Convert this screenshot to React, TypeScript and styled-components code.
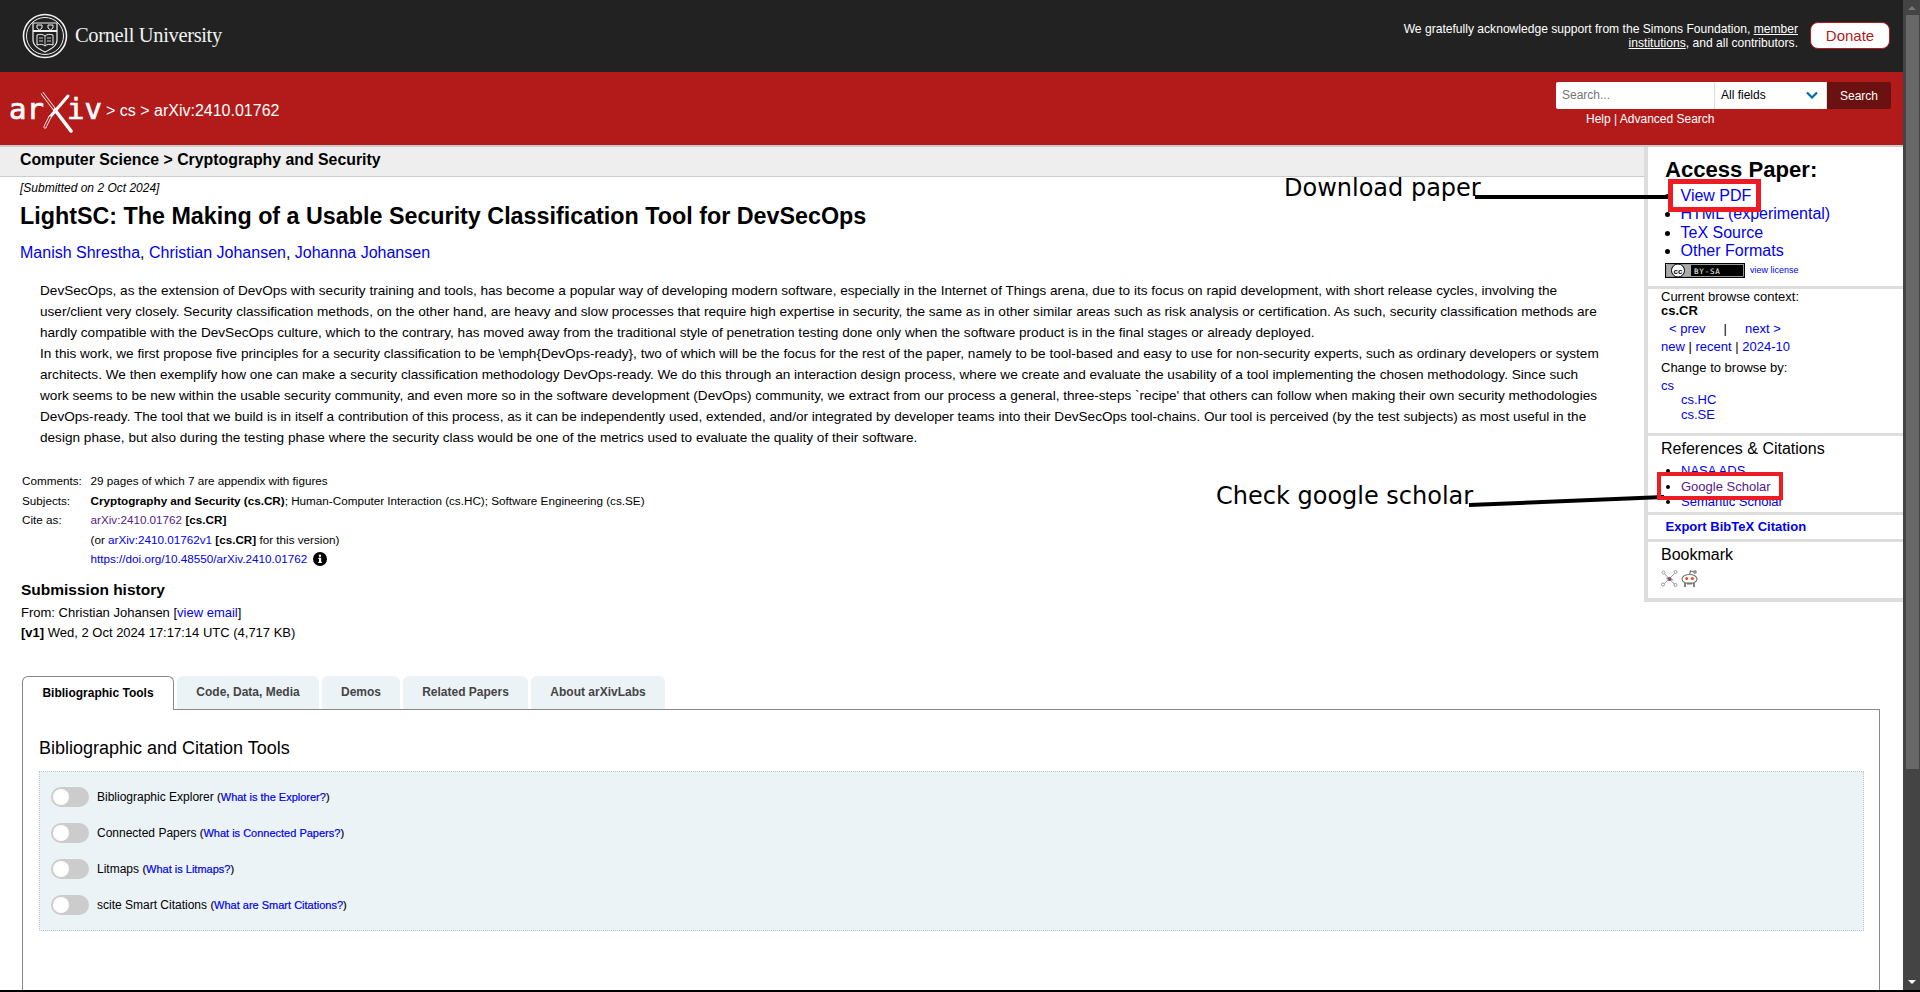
import styled, { createGlobalStyle } from "styled-components";

const GlobalStyle = createGlobalStyle`
  html, body {
    margin: 0;
    padding: 0;
    height: 100%;
    overflow: hidden;
    background: #fff;
    font-family: "Liberation Sans", Arial, sans-serif;
    color: #000;
  }
  a { color: #0000ee; text-decoration: none; }
`;

const Frame = styled.div`
  position: relative;
  width: 1920px;
  height: 992px;
  overflow: hidden;
  display: flex;
  flex-direction: column;
`;

const Viewport = styled.div`
  display: flex;
  height: 990px;
  overflow: hidden;
`;

const BottomEdge = styled.div`
  height: 2px;
  background: #000;
`;

const Page = styled.div`
  width: 1903px;
`;

// Scrollbar
const Scrollbar = styled.div`
  width: 17px;
  background: #444;
  display: flex;
  flex-direction: column;
  align-items: center;
`;

const ScrollArrow = styled.div<{ $down?: boolean }>`
  width: 0;
  height: 0;
  margin: ${(p) => (p.$down ? "auto 0 6px" : "6px 0 5px")};
  border-left: 4px solid transparent;
  border-right: 4px solid transparent;
  ${(p) => (p.$down ? "border-top: 4px solid #fff;" : "border-bottom: 4px solid #777;")}
`;

const ScrollThumb = styled.div`
  width: 13px;
  height: 754px;
  margin-left: 1px;
  background: #686868;
`;

// Header
const TopBar = styled.header`
  height: 72px;
  background: #222;
  display: flex;
  align-items: center;
  justify-content: space-between;
  padding: 0 13px 0 22px;
`;

const CornellLogo = styled.div`
  display: flex;
  align-items: center;
  gap: 7px;
`;

const CornellName = styled.span`
  font-family: "Liberation Serif", serif;
  font-size: 20.5px;
  letter-spacing: -0.35px;
  color: #f2f2f2;
  padding-bottom: 2px;
`;

const Support = styled.div`
  display: flex;
  align-items: center;
  gap: 12px;
`;

const SupportText = styled.p`
  margin: 0;
  width: 402px;
  text-align: right;
  color: #fff;
  font-size: 12.1px;
  line-height: 14px;

  a {
    color: #fff;
    text-decoration: underline;
  }
`;

const Donate = styled.a`
  width: 80px;
  height: 27px;
  margin-top: -1px;
  box-sizing: border-box;
  background: #fff;
  border: 1px solid #b31b1b;
  border-radius: 8px;
  display: flex;
  align-items: center;
  justify-content: center;
  font-size: 15px;
  && {
    color: #b31b1b;
  }
`;

const RedBar = styled.div`
  height: 73px;
  border-bottom: 2px solid #ccc;
  background: #b31b1b;
  display: flex;
  justify-content: space-between;
  padding: 0 12px 0 10px;
`;

const Crumbs = styled.div`
  display: flex;
  align-items: center;
  gap: 4px;
  color: #fff;
  font-size: 16px;
  height: 78px;
`;

const SearchBlock = styled.div`
  padding-top: 10px;
  width: 335px;
`;

const SearchRow = styled.div`
  display: flex;
  height: 27px;
`;

const SearchInput = styled.input`
  width: 158px;
  box-sizing: border-box;
  border: none;
  outline: none;
  padding: 0 6px 2px;
  font: 12px "Liberation Sans", sans-serif;
  background: #fff;
  border-radius: 2px 0 0 2px;
`;

const FieldSelect = styled.div`
  width: 113px;
  box-sizing: border-box;
  background: #fff;
  border-left: 1px solid #ddd;
  border-right: 1px solid #ddd;
  padding: 0 8px 2px 6px;
  display: flex;
  align-items: center;
  justify-content: space-between;
  font-size: 12px;
`;

const SearchButton = styled.button`
  width: 64px;
  border: none;
  background: #6a1212;
  color: #fff;
  font: 12px "Liberation Sans", sans-serif;
  border-radius: 0 2px 2px 0;
  padding: 0;
`;

const SearchLinks = styled.div`
  margin: 3px 0 0 30px;
  color: #fff;
  font-size: 12px;
  line-height: 14px;

  a {
    color: #fff;
  }
`;

// Article area
const Upper = styled.div`
  display: flex;
  align-items: flex-start;
`;

const Article = styled.main`
  width: 1644px;
`;

const Subheader = styled.div`
  box-sizing: border-box;
  height: 30px;
  background: #eee;
  border-bottom: 1px solid #ccc;
  padding-left: 20px;
  font-size: 15.85px;
  font-weight: bold;
  line-height: 25px;
`;

const Submitted = styled.div`
  margin: 5px 0 0 20px;
  font-size: 12px;
  font-style: italic;
  line-height: 13px;
`;

const Title = styled.h1`
  margin: 7px 0 0 20px;
  font-size: 23.3px;
  line-height: 28px;
  font-weight: bold;
`;

const Authors = styled.div`
  margin: 13px 0 0 20px;
  font-size: 16px;
  line-height: 20px;
`;

const Abstract = styled.blockquote`
  margin: 17px 0 0 40px;
  width: 1564px;
  font-size: 13.6px;
  line-height: 21px;
`;

const AbstractPara = styled.p`
  margin: 0;
`;

const Meta = styled.div`
  margin: 23px 0 0 22px;
  display: grid;
  grid-template-columns: 68.5px 1fr;
  grid-auto-rows: 19.5px;
  font-size: 11.7px;
  align-items: center;
`;

const Visited = styled.a`
  && {
    color: #551a8b;
  }
`;

const InfoIcon = styled.span`
  display: inline-flex;
  vertical-align: -3px;
  margin-left: 6px;
`;

const HistoryTitle = styled.h2`
  margin: 11px 0 0 21px;
  font-size: 15.5px;
  line-height: 20px;
`;

const HistoryLine = styled.div<{ $mt: number }>`
  margin: ${(p) => p.$mt}px 0 0 21px;
  font-size: 13px;
  line-height: 19px;
`;

// Right column
const Sidebar = styled.aside`
  width: 259px;
  box-sizing: border-box;
  border-left: 4px solid #ddd;
  border-bottom: 4px solid #ddd;
`;

const Section = styled.section<{ $h: number }>`
  height: ${(p) => p.$h}px;
  box-sizing: border-box;
  border-bottom: 3px solid #ddd;
  padding-left: 13px;

  &:last-child {
    border-bottom: none;
  }
`;

const AccessTitle = styled.h2`
  margin: 0;
  padding: 11px 0 0 4px;
  font-size: 22.1px;
  line-height: 24px;
`;

const AccessList = styled.ul`
  margin: 5px 0 0;
  padding: 0 0 0 19.5px;
  font-size: 16px;
  line-height: 18.4px;
`;

const LicenseRow = styled.div`
  margin: 2px 0 0 4px;
  display: flex;
  align-items: center;
  gap: 5px;
  font-size: 9px;
`;

const Browse = styled.div<{ $mt?: number; $lh?: number; $indent?: number; $bold?: boolean }>`
  margin-top: ${(p) => p.$mt ?? 0}px;
  margin-left: ${(p) => p.$indent ?? 0}px;
  line-height: ${(p) => p.$lh ?? 14}px;
  font-size: 13px;
  font-weight: ${(p) => (p.$bold ? "bold" : "normal")};
  white-space: pre;
`;

const SideHeading = styled.h3`
  margin: 0;
  padding-top: 4px;
  font-size: 16px;
  font-weight: normal;
  line-height: 18px;
`;

const RefList = styled.ul`
  margin: 5px 0 0;
  padding: 0 0 0 20px;
  font-size: 13px;
  line-height: 15.5px;
`;

const ExportLink = styled.a`
  display: block;
  padding-left: 4.5px;
  font-size: 13px;
  font-weight: bold;
  line-height: 23px;
`;

const BookmarkIcons = styled.div`
  margin-top: 6px;
  display: flex;
  gap: 2px;
`;

// Labs
const Tabs = styled.div`
  margin: 34px 0 0 22px;
  display: flex;
  gap: 3px;
  position: relative;
  z-index: 1;
`;

const Tab = styled.div<{ $w: number; $active?: boolean }>`
  width: ${(p) => p.$w}px;
  height: 33px;
  box-sizing: border-box;
  display: flex;
  align-items: center;
  justify-content: center;
  font-size: 12px;
  font-weight: bold;
  border-radius: 6px 6px 0 0;
  background: ${(p) => (p.$active ? "#fff" : "#ecf3f7")};
  color: ${(p) => (p.$active ? "#000" : "#444")};
  border: ${(p) => (p.$active ? "1px solid #888" : "none")};
  border-bottom: none;
  ${(p) => p.$active && "height: 34px; margin-bottom: -1px;"}
`;

const LabsBody = styled.div`
  margin: 0 23px 0 22px;
  border: 1px solid #888;
  padding: 27px 15px 60px 16px;
`;

const LabsTitle = styled.h2`
  margin: 0;
  font-size: 18px;
  font-weight: normal;
  line-height: 22px;
`;

const ToolPanel = styled.div`
  margin-top: 12px;
  background: #ecf3f7;
  border: 1px dotted #bcc8cf;
  padding: 15px 11px;
  display: flex;
  flex-direction: column;
  gap: 16px;
`;

const ToolRow = styled.div`
  display: flex;
  align-items: center;
  gap: 8px;
  height: 20px;
  font-size: 12px;
`;

const Toggle = styled.span`
  width: 38px;
  height: 20px;
  border-radius: 10px;
  background: #ccc;
  display: flex;
  align-items: center;
  padding-left: 2px;
  box-sizing: border-box;
`;

const Knob = styled.span`
  width: 16px;
  height: 16px;
  border-radius: 50%;
  background: #fff;
`;

const ToolHelp = styled.span`
  font-size: 11px;
  -webkit-text-stroke: 0.2px currentColor;
`;

// Annotations over the page
const AnnotationLines = styled.svg`
  position: absolute;
  left: 0;
  top: 0;
  pointer-events: none;
`;

const RedBox = styled.div<{ $x: number; $y: number; $w: number; $h: number; $b: number }>`
  position: absolute;
  left: ${(p) => p.$x}px;
  top: ${(p) => p.$y}px;
  width: ${(p) => p.$w}px;
  height: ${(p) => p.$h}px;
  box-sizing: border-box;
  border: ${(p) => p.$b}px solid #ed1c24;
`;

const Note = styled.div<{ $x: number; $y: number }>`
  position: absolute;
  left: ${(p) => p.$x}px;
  top: ${(p) => p.$y}px;
  font-family: "DejaVu Sans", sans-serif;
  font-size: 24px;
  line-height: 28px;
  white-space: nowrap;
`;

const Seal = () => (
  <svg width="46" height="46" viewBox="0 0 46 46" fill="none" stroke="#f2f2f2">
    <circle cx="23" cy="23" r="21.5" strokeWidth="1.6" />
    <circle cx="23" cy="23" r="18.5" strokeWidth="1" />
    <path d="M11 10h24v17c0 6-6 9-12 12-6-3-12-6-12-12z" strokeWidth="1.2" fill="#222" />
    <path d="M11 18h24" strokeWidth="2" />
    <path d="M15 12h5v3l-2.500 2-2.500-2zM26 12h5v3l-2.500 2-2.500-2z" strokeWidth="1" />
    <path d="M15 22c3-1 6-1 8 1 2-2 5-2 8-1v10c-3-1-6-1-8 1-2-2-5-2-8-1z" strokeWidth="1" />
    <path d="M23 23v10M17 25h4M17 28h4M25 25h4M25 28h4" strokeWidth=".8" />
  </svg>
);

const ArxivLogo = () => (
  <svg width="92" height="46" viewBox="0 0 92 46">
    <text x="-1" y="31" fill="#fff" stroke="#fff" strokeWidth=".7" fontFamily="'DejaVu Sans Mono', monospace" fontSize="29">ar</text>
    <text x="57" y="31" fill="#fff" stroke="#fff" strokeWidth=".7" fontFamily="'DejaVu Sans Mono', monospace" fontSize="29">iv</text>
    <path d="M32 5l13 17" stroke="#fff" strokeWidth="3.2" />
    <path d="M32 5l13 17" stroke="#b31b1b" strokeWidth="1.800" />
    <path d="M45 22l16 21" stroke="#fff" strokeWidth="3.600" strokeLinecap="round" />
    <path d="M58 8L40 29" stroke="#fff" strokeWidth="3" strokeLinecap="round" />
    <path d="M40 29l-5 10" stroke="#fff" strokeWidth="3" strokeLinecap="round" />
    <path d="M40 29l-5 10" stroke="#b31b1b" strokeWidth="1.600" strokeLinecap="round" />
  </svg>
);

const Chevron = () => (
  <svg width="12" height="8" viewBox="0 0 12 8" fill="none">
    <path d="M1 1.500l5 5 5-5" stroke="#0068ac" strokeWidth="2.200" />
  </svg>
);

const CcBadge = () => (
  <svg width="80" height="15" viewBox="0 0 80 15">
    <rect x=".5" y=".5" width="79" height="14" fill="#000" stroke="#000" />
    <rect x="1.500" y="1.500" width="77" height="12" fill="#000" stroke="#fff" strokeWidth=".6" />
    <path d="M2 2h24v11H2z" fill="#aaa" />
    <circle cx="13" cy="7.500" r="6.500" fill="#fff" stroke="#000" />
    <text x="13" y="10.500" textAnchor="middle" fontSize="8" fontWeight="bold" fontFamily="'Liberation Sans', sans-serif">cc</text>
    <text x="29" y="10.500" fill="#fff" fontSize="7.500" letterSpacing=".8" fontFamily="'DejaVu Sans Mono', monospace">BY-SA</text>
  </svg>
);

const ScienceWise = () => (
  <svg width="17" height="17" viewBox="0 0 17 17" fill="none" stroke="#999" strokeWidth="1">
    <path d="M3 3l11 12M14 3L3 14M8.500 9L5 8M8.500 9l4 1" />
    <circle cx="2.500" cy="2.500" r="1.500" fill="#fff" />
    <circle cx="14.500" cy="2" r="1.500" fill="#fff" />
    <circle cx="2" cy="14.500" r="1.500" fill="#fff" />
    <circle cx="14.500" cy="15" r="1.500" fill="#fff" />
    <circle cx="8.500" cy="9" r="2" fill="#8a4a6a" stroke="none" />
  </svg>
);

const RedditAlien = () => (
  <svg width="19" height="18" viewBox="0 0 19 18" fill="none" stroke="#777" strokeWidth="1.200">
    <ellipse cx="9.500" cy="9" rx="7.500" ry="4.500" fill="#fff" />
    <circle cx="6.700" cy="8.500" r="1.500" fill="#f04a1a" stroke="none" />
    <circle cx="12.300" cy="8.500" r="1.500" fill="#f04a1a" stroke="none" />
    <path d="M9.500 4.500L10.500 1l4 1" />
    <circle cx="15" cy="2" r="1.200" fill="#fff" />
    <path d="M5 13v4M14 13v4M7 13.500h5" strokeWidth="1.800" />
  </svg>
);

const Info = () => (
  <svg width="14" height="14" viewBox="0 0 14 14">
    <circle cx="7" cy="7" r="7" fill="#000" />
    <rect x="6" y="5.800" width="2.200" height="5" fill="#fff" />
    <rect x="5.200" y="5.800" width="2" height="1" fill="#fff" />
    <rect x="5.200" y="9.800" width="3.800" height="1" fill="#fff" />
    <circle cx="7" cy="3.800" r="1.200" fill="#fff" />
  </svg>
);

const abstractParas = [
  "DevSecOps, as the extension of DevOps with security training and tools, has become a popular way of developing modern software, especially in the Internet of Things arena, due to its focus on rapid development, with short release cycles, involving the user/client very closely. Security classification methods, on the other hand, are heavy and slow processes that require high expertise in security, the same as in other similar areas such as risk analysis or certification. As such, security classification methods are hardly compatible with the DevSecOps culture, which to the contrary, has moved away from the traditional style of penetration testing done only when the software product is in the final stages or already deployed.",
  "In this work, we first propose five principles for a security classification to be \\emph{DevOps-ready}, two of which will be the focus for the rest of the paper, namely to be tool-based and easy to use for non-security experts, such as ordinary developers or system architects. We then exemplify how one can make a security classification methodology DevOps-ready. We do this through an interaction design process, where we create and evaluate the usability of a tool implementing the chosen methodology. Since such work seems to be new within the usable security community, and even more so in the software development (DevOps) community, we extract from our process a general, three-steps `recipe' that others can follow when making their own security methodologies DevOps-ready. The tool that we build is in itself a contribution of this process, as it can be independently used, extended, and/or integrated by developer teams into their DevSecOps tool-chains. Our tool is perceived (by the test subjects) as most useful in the design phase, but also during the testing phase where the security class would be one of the metrics used to evaluate the quality of their software.",
];

const tools = [
  { name: "Bibliographic Explorer", help: "What is the Explorer?" },
  { name: "Connected Papers", help: "What is Connected Papers?" },
  { name: "Litmaps", help: "What is Litmaps?" },
  { name: "scite Smart Citations", help: "What are Smart Citations?" },
];

const tabs = [
  { label: "Bibliographic Tools", w: 152, active: true },
  { label: "Code, Data, Media", w: 142 },
  { label: "Demos", w: 78 },
  { label: "Related Papers", w: 125 },
  { label: "About arXivLabs", w: 134 },
];

const App = () => {
  return (
    <Frame>
      <GlobalStyle />
      <Viewport>
        <Page>
          <TopBar>
            <CornellLogo>
              <Seal />
              <CornellName>Cornell University</CornellName>
            </CornellLogo>
            <Support>
              <SupportText>
                We gratefully acknowledge support from the Simons Foundation, <a href="#">member institutions</a>, and all contributors.
              </SupportText>
              <Donate href="#">Donate</Donate>
            </Support>
          </TopBar>

          <RedBar>
            <Crumbs>
              <ArxivLogo />
              <span>&gt; cs &gt; arXiv:2410.01762</span>
            </Crumbs>
            <SearchBlock>
              <SearchRow>
                <SearchInput placeholder="Search..." />
                <FieldSelect>
                  All fields
                  <Chevron />
                </FieldSelect>
                <SearchButton>Search</SearchButton>
              </SearchRow>
              <SearchLinks>
                <a href="#">Help</a> | <a href="#">Advanced Search</a>
              </SearchLinks>
            </SearchBlock>
          </RedBar>

          <Upper>
            <Article>
              <Subheader>Computer Science &gt; Cryptography and Security</Subheader>
              <Submitted>[Submitted on 2 Oct 2024]</Submitted>
              <Title>LightSC: The Making of a Usable Security Classification Tool for DevSecOps</Title>
              <Authors>
                <a href="#">Manish Shrestha</a>, <a href="#">Christian Johansen</a>, <a href="#">Johanna Johansen</a>
              </Authors>
              <Abstract>
                {abstractParas.map((para) => (
                  <AbstractPara key={para.slice(0, 12)}>{para}</AbstractPara>
                ))}
              </Abstract>
              <Meta>
                <span>Comments:</span>
                <span>29 pages of which 7 are appendix with figures</span>
                <span>Subjects:</span>
                <span>
                  <b>Cryptography and Security (cs.CR)</b>; Human-Computer Interaction (cs.HC); Software Engineering (cs.SE)
                </span>
                <span>Cite as:</span>
                <span>
                  <Visited href="#">arXiv:2410.01762</Visited> <b>[cs.CR]</b>
                </span>
                <span />
                <span>
                  (or <a href="#">arXiv:2410.01762v1</a> <b>[cs.CR]</b> for this version)
                </span>
                <span />
                <span>
                  <a href="#">https://doi.org/10.48550/arXiv.2410.01762</a>
                  <InfoIcon>
                    <Info />
                  </InfoIcon>
                </span>
              </Meta>
              <HistoryTitle>Submission history</HistoryTitle>
              <HistoryLine $mt={3}>
                From: Christian Johansen [<a href="#">view email</a>]
              </HistoryLine>
              <HistoryLine $mt={1}>
                <b>[v1]</b> Wed, 2 Oct 2024 17:17:14 UTC (4,717 KB)
              </HistoryLine>
            </Article>

            <Sidebar>
              <Section $h={142}>
                <AccessTitle>Access Paper:</AccessTitle>
                <AccessList>
                  <li><a href="#">View PDF</a></li>
                  <li><a href="#">HTML (experimental)</a></li>
                  <li><a href="#">TeX Source</a></li>
                  <li><a href="#">Other Formats</a></li>
                </AccessList>
                <LicenseRow>
                  <CcBadge />
                  <a href="#">view license</a>
                </LicenseRow>
              </Section>
              <Section $h={146}>
                <Browse $mt={1}>Current browse context:</Browse>
                <Browse $bold>cs.CR</Browse>
                <Browse $mt={2} $lh={18} $indent={8}>
                  <a href="#">&lt; prev</a>{"     |     "}<a href="#">next &gt;</a>
                </Browse>
                <Browse $lh={18}>
                  <a href="#">new</a> | <a href="#">recent</a> | <a href="#">2024-10</a>
                </Browse>
                <Browse $mt={5}>Change to browse by:</Browse>
                <Browse $mt={4}><a href="#">cs</a></Browse>
                <Browse $indent={20}><a href="#">cs.HC</a></Browse>
                <Browse $mt={1} $indent={20}><a href="#">cs.SE</a></Browse>
              </Section>
              <Section $h={79}>
                <SideHeading>References &amp; Citations</SideHeading>
                <RefList>
                  <li><a href="#">NASA ADS</a></li>
                  <li><Visited href="#">Google Scholar</Visited></li>
                  <li><a href="#">Semantic Scholar</a></li>
                </RefList>
              </Section>
              <Section $h={27}>
                <ExportLink href="#">Export BibTeX Citation</ExportLink>
              </Section>
              <Section $h={56}>
                <SideHeading>Bookmark</SideHeading>
                <BookmarkIcons>
                  <ScienceWise />
                  <RedditAlien />
                </BookmarkIcons>
              </Section>
            </Sidebar>
          </Upper>

          <Tabs>
            {tabs.map((t) => (
              <Tab key={t.label} $w={t.w} $active={t.active}>
                {t.label}
              </Tab>
            ))}
          </Tabs>
          <LabsBody>
            <LabsTitle>Bibliographic and Citation Tools</LabsTitle>
            <ToolPanel>
              {tools.map((t) => (
                <ToolRow key={t.name}>
                  <Toggle>
                    <Knob />
                  </Toggle>
                  <span>
                    {t.name} <ToolHelp>(<a href="#">{t.help}</a>)</ToolHelp>
                  </span>
                </ToolRow>
              ))}
            </ToolPanel>
          </LabsBody>
        </Page>
        <Scrollbar>
          <ScrollArrow />
          <ScrollThumb />
          <ScrollArrow $down />
        </Scrollbar>
      </Viewport>
      <BottomEdge />

      <AnnotationLines width="1920" height="992">
        <line x1="1475" y1="197" x2="1669" y2="197" stroke="#000" strokeWidth="4" />
        <line x1="1469" y1="505" x2="1664" y2="497" stroke="#000" strokeWidth="4" />
      </AnnotationLines>
      <RedBox $x={1668} $y={179} $w={93} $h={33} $b={5} />
      <RedBox $x={1657} $y={472} $w={126} $h={28} $b={4} />
      <Note $x={1284} $y={174}>Download paper</Note>
      <Note $x={1216} $y={482}>Check google scholar</Note>
    </Frame>
  );
};

export default App;
